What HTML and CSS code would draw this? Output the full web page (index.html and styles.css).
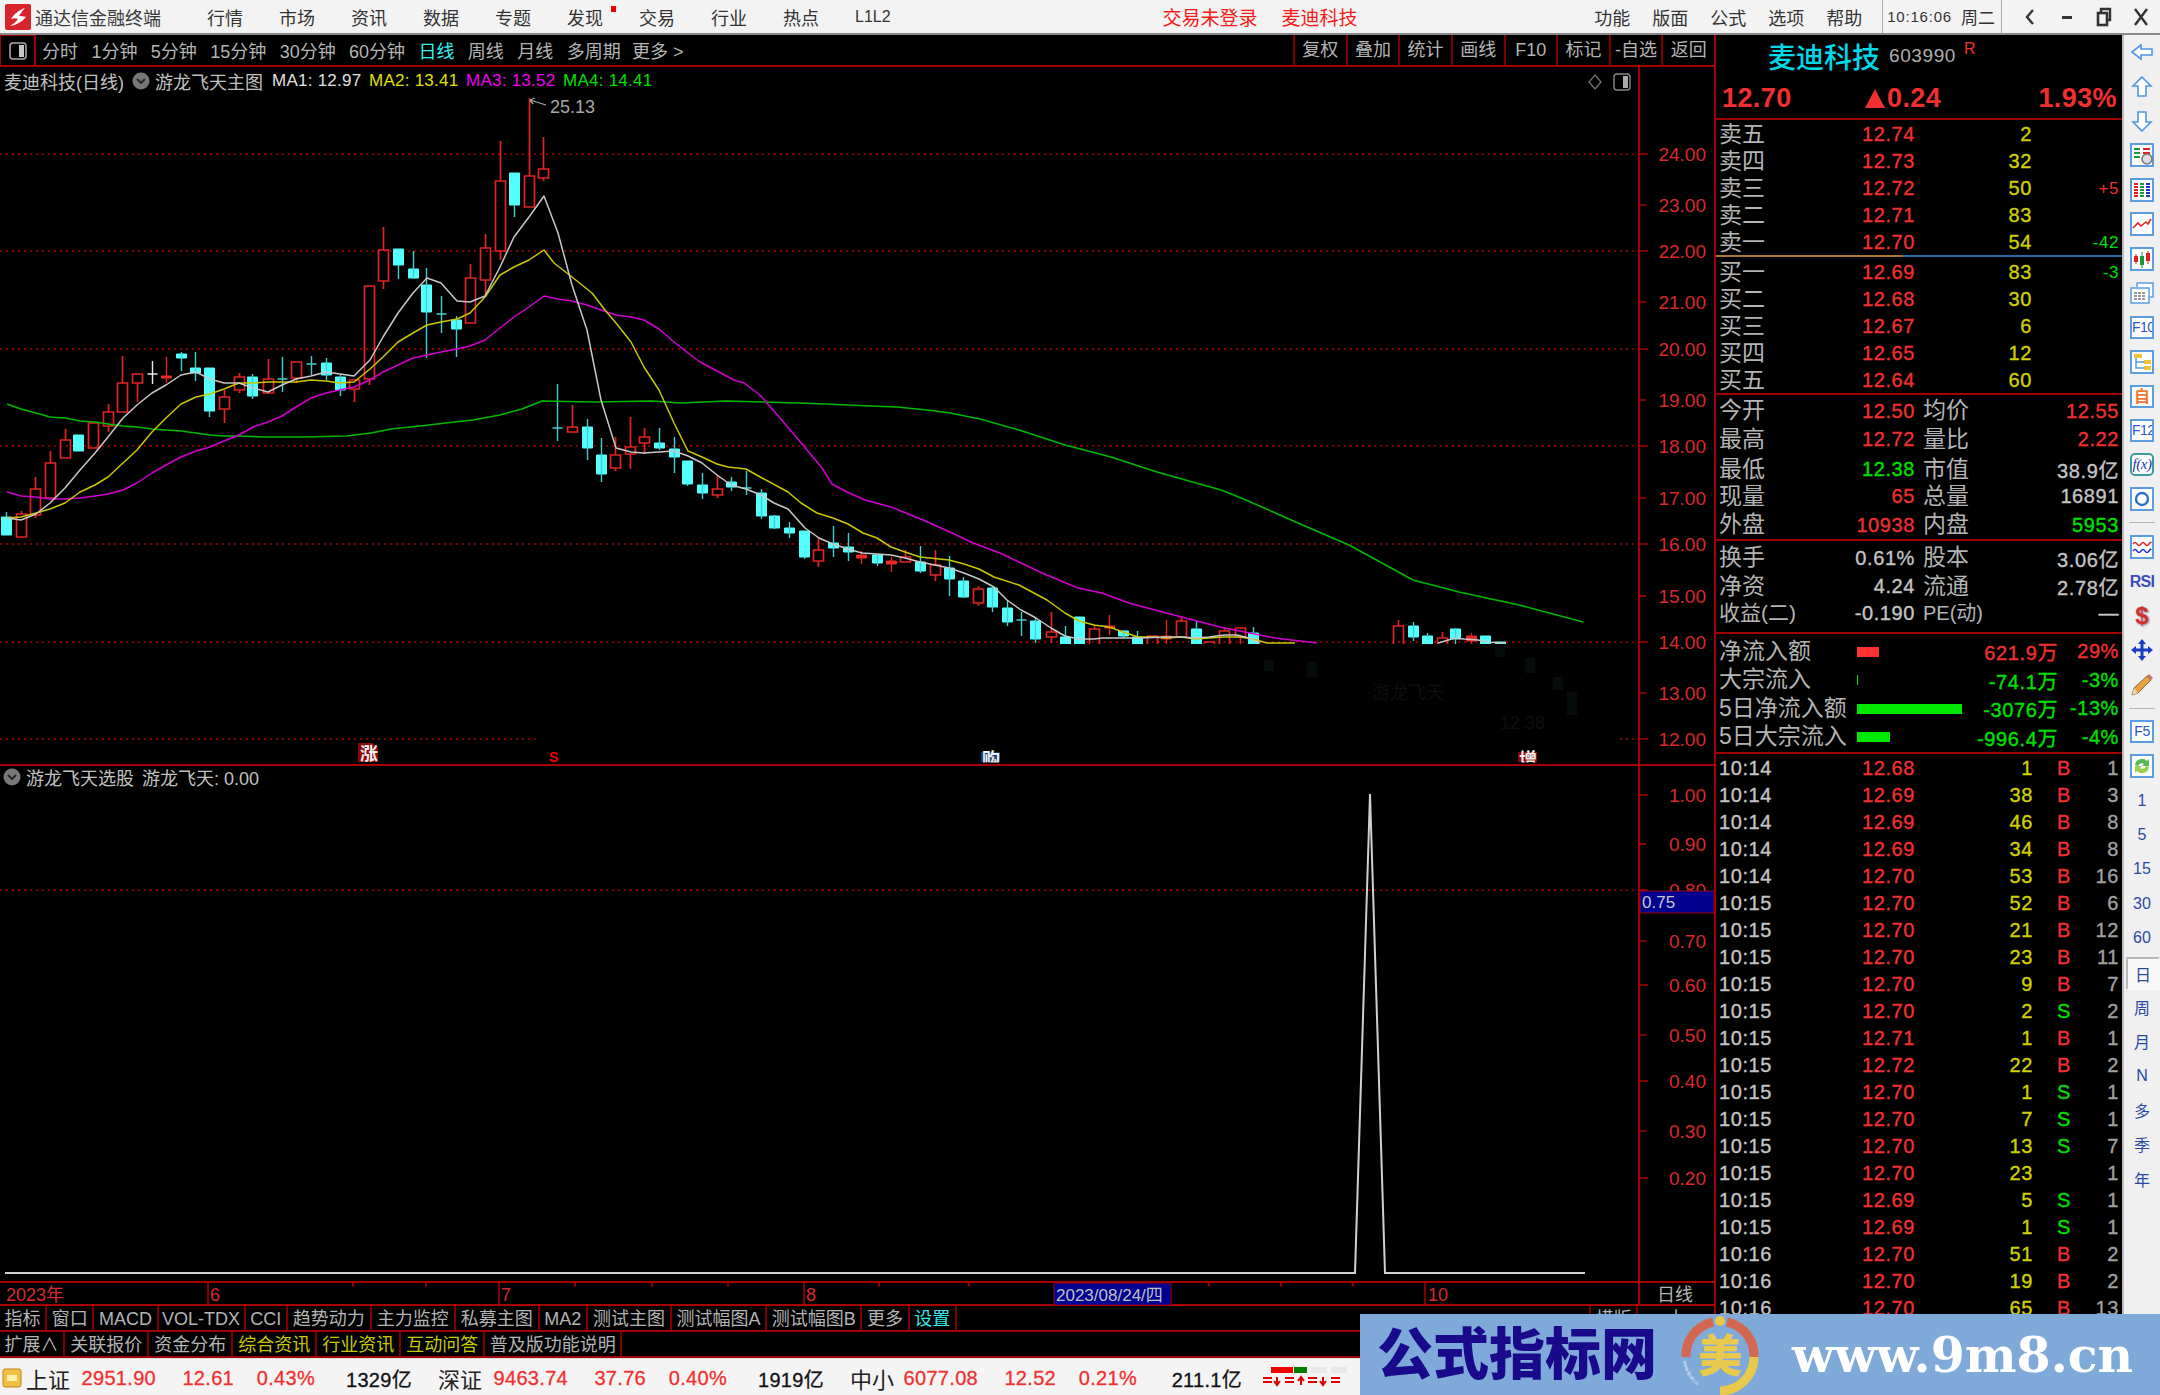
FILE: index.html
```html
<!DOCTYPE html>
<html lang="zh-CN">
<head>
<meta charset="utf-8">
<title>通达信金融终端</title>
<link rel="stylesheet" href="styles.css">
</head>
<body>
<div class="app">
  <header class="titlebar">
    <svg class="applogo" viewBox="0 0 26 26"><rect width="26" height="26" rx="2" fill="#d8232a"/><path d="M20 4C14 6 9 10 6 15c3-1 5-1 7 0-2 3-5 5-8 7 6-1 12-4 16-9-3-1-5-1-7-1 2-3 4-6 6-8z" fill="#fff"/></svg>
    <span class="apptitle">通达信金融终端</span>
    <nav class="menu">
      <span>行情</span><span>市场</span><span>资讯</span><span>数据</span><span>专题</span><span class="hasdot">发现<i class="dot"></i></span><span>交易</span><span>行业</span><span>热点</span><span class="l2">L1L2</span>
    </nav>
    <div class="alert"><span>交易未登录</span><span>麦迪科技</span></div>
    <nav class="menu-right"><span>功能</span><span>版面</span><span>公式</span><span>选项</span><span>帮助</span></nav>
    <div class="clock"><span class="time">10:16:06</span><span class="week">周二</span></div>
    <div class="winbtns">
      <svg viewBox="0 0 16 20"><path d="M11 3 5 10l6 7" fill="none" stroke="#333" stroke-width="2.4"/></svg>
      <svg viewBox="0 0 16 20"><path d="M3 10.5h10" stroke="#333" stroke-width="3"/></svg>
      <svg viewBox="0 0 16 20"><path d="M5 5V2h9v11h-3" fill="none" stroke="#333" stroke-width="2.4"/><rect x="2" y="6" width="9" height="12" fill="none" stroke="#333" stroke-width="2.6"/></svg>
      <svg viewBox="0 0 16 20"><path d="M2 2l12 16M14 2 2 18" stroke="#333" stroke-width="2.4"/></svg>
    </div>
  </header>

  <div class="workspace">
    <section class="left">
      <div class="toolbar">
        <div class="panelbtn"><svg viewBox="0 0 18 18"><rect x="1" y="1" width="16" height="16" rx="3" fill="none" stroke="#a8a8a8" stroke-width="1.6"/><rect x="10" y="3" width="5" height="12" fill="#c8c8c8"/></svg></div>
        <div class="periods">
          <span>分时</span><span>1分钟</span><span>5分钟</span><span>15分钟</span><span>30分钟</span><span>60分钟</span><span class="cur">日线</span><span>周线</span><span>月线</span><span>多周期</span><span class="more">更多 &gt;</span>
        </div>
        <div class="tools">
          <span>复权</span><span>叠加</span><span>统计</span><span>画线</span><span>F10</span><span>标记</span><span>-自选</span><span>返回</span>
        </div>
      </div>

      <div class="chart">
        <svg class="plot" viewBox="0 67 1715 1239" width="1715" height="1239">
          <defs>
            <clipPath id="cut"><rect x="0" y="67" width="1639" height="577"/></clipPath>
            <clipPath id="sig"><rect x="0" y="743" width="1639" height="19.5"/></clipPath>
          </defs>
          <g class="grid">
            <path d="M0 154H1639M0 251H1639M0 349H1639M0 446H1639M0 544H1639M0 642H1639M0 739H537M1620 739H1639M0 890H1639"/>
          </g>
          <g clip-path="url(#cut)">
            <path class="k-up" d="M21.5 511V514M16.5 514H26.5V537H16.5ZM35.5 477V489M30.5 489H40.5V515H30.5ZM35.5 515V518M50.5 451V463M45.5 463H55.5V498H45.5ZM65.5 429V440M60.5 440H70.5V458H60.5ZM93.5 422V423M88.5 423H98.5V448H88.5ZM108.5 404V412M103.5 412H113.5V426H103.5ZM108.5 426V432M122.5 356V383M117.5 383H127.5V412H117.5ZM132.5 374H142.5V383H132.5ZM137.5 383V402M224.5 390V397M219.5 397H229.5V409H219.5ZM224.5 409V423M239.5 373V377M234.5 377H244.5V390H234.5ZM239.5 390V393M268.5 359V379M263.5 379H273.5V393H263.5ZM291.5 362H301.5V378H291.5ZM296.5 378V383M349.5 380H359.5V389H349.5ZM354.5 389V402M364.5 286H374.5V379H364.5ZM369.5 379V385M383.5 227V250M378.5 250H388.5V281H378.5ZM383.5 281V289M470.5 264V278M465.5 278H475.5V323H465.5ZM485.5 234V248M480.5 248H490.5V280H480.5ZM485.5 280V295M500.5 141V181M495.5 181H505.5V251H495.5ZM500.5 251V260M529.5 98V176M524.5 176H534.5V207H524.5ZM543.5 137V169M538.5 169H548.5V178H538.5ZM543.5 178V181M572.5 405V427M567.5 427H577.5V432H567.5ZM615.5 437V455M610.5 455H620.5V468H610.5ZM615.5 468V471M630.5 417V447M625.5 447H635.5V454H625.5ZM630.5 454V469M644.5 428V437M639.5 437H649.5V443H639.5ZM644.5 443V454M717.5 475V489M712.5 489H722.5V495H712.5ZM717.5 495V498M818.5 538V550M813.5 550H823.5V561H813.5ZM818.5 561V567M900.5 557H910.5V562H900.5ZM905.5 550V557M935.5 550V565M930.5 565H940.5V575H930.5ZM935.5 575V581M978.5 586V589M973.5 589H983.5V603H973.5ZM978.5 603V606M1051.5 612V632M1046.5 632H1056.5V637H1046.5ZM1051.5 637V643M1094.5 625V629M1089.5 629H1099.5V650H1089.5ZM1147.5 636H1157.5V650H1147.5ZM1181.5 616V621M1176.5 621H1186.5V637H1176.5ZM1204.5 642H1214.5V650H1204.5ZM1224.5 627V631M1219.5 631H1229.5V650H1219.5ZM1235.5 628H1245.5V637H1235.5ZM1240.5 637V644M1398.5 620V626M1393.5 626H1403.5V650H1393.5ZM1442.5 632V638M1437.5 638H1447.5V650H1437.5Z"/>
            <path class="k-upfill" d="M161.5 376H171.5V378H161.5ZM856.5 555H866.5V558H856.5ZM886.5 561H896.5V564H886.5ZM1104.5 626H1114.5V628H1104.5ZM1161.5 636H1171.5V639H1161.5ZM1466.5 636H1476.5V641H1466.5Z"/>
            <path class="k-up thin" d="M166.5 357V383M861.5 551V564M891.5 557V572M1109.5 615V635M1166.5 620V644M1471.5 633V644"/>
            <path class="k-down" d="M1.5 517H11.5V535H1.5ZM73.5 435H83.5V451H73.5ZM176.5 354H186.5V358H176.5ZM190.5 368H200.5V373H190.5ZM204.5 368H214.5V411H204.5ZM247.5 377H257.5V396H247.5ZM321.5 363H331.5V375H321.5ZM335.5 377H345.5V390H335.5ZM393.5 249H403.5V265H393.5ZM408.5 269H418.5V278H408.5ZM421.5 285H431.5V312H421.5ZM451.5 320H461.5V329H451.5ZM509.5 173H519.5V205H509.5ZM582.5 427H592.5V448H582.5ZM596.5 455H606.5V474H596.5ZM654.5 443H664.5V448H654.5ZM669.5 449H679.5V457H669.5ZM682.5 461H692.5V484H682.5ZM697.5 485H707.5V493H697.5ZM726.5 482H736.5V487H726.5ZM756.5 493H766.5V516H756.5ZM769.5 516H779.5V528H769.5ZM784.5 528H794.5V533H784.5ZM799.5 531H809.5V557H799.5ZM828.5 543H838.5V548H828.5ZM843.5 547H853.5V552H843.5ZM872.5 555H882.5V563H872.5ZM915.5 562H925.5V571H915.5ZM944.5 568H954.5V579H944.5ZM958.5 581H968.5V597H958.5ZM987.5 588H997.5V607H987.5ZM1002.5 608H1012.5V622H1002.5ZM1030.5 621H1040.5V639H1030.5ZM1060.5 637H1070.5V650H1060.5ZM1074.5 617H1084.5V650H1074.5ZM1118.5 631H1128.5V636H1118.5ZM1132.5 637H1142.5V650H1132.5ZM1191.5 629H1201.5V650H1191.5ZM1248.5 633H1258.5V650H1248.5ZM1408.5 626H1418.5V637H1408.5ZM1422.5 636H1432.5V650H1422.5ZM1450.5 629H1460.5V639H1450.5ZM1480.5 636H1490.5V650H1480.5ZM1495.5 642H1505.5V650H1495.5Z"/>
            <path class="k-wick" d="M6.5 512V517M181.5 352V371M195.5 352V381M209.5 411V417M252.5 374V399M326.5 358V380M340.5 375V396M398.5 265V279M413.5 251V279M426.5 268V358M456.5 316V357M514.5 205V217M587.5 419V460M601.5 438V482M659.5 428V450M674.5 437V473M687.5 484V486M702.5 473V499M731.5 477V491M761.5 489V519M774.5 515V529M789.5 522V538M804.5 557V559M833.5 526V557M848.5 533V561M877.5 554V566M920.5 546V573M949.5 556V596M963.5 577V598M992.5 587V612M1007.5 600V626M1035.5 618V643M1065.5 626V637M1123.5 630V638M1137.5 631V637M1196.5 621V629M1253.5 627V633M1413.5 622V641M1427.5 633V636M1455.5 628V644M282.5 357V392M277.5 379H287.5M311.5 356V375M306.5 364H316.5M441.5 296V333M436.5 314H446.5M557.5 384V441M552.5 428H562.5M746.5 471V495M741.5 488H751.5M1021.5 612V636M1016.5 620H1026.5"/>
            <path class="k-doji" d="M152.5 361V384M147.5 374H157.5"/>
            <polyline class="ma ma4" points="7,404 21,409 36,413 50,417 65,418 80,421 95,422 108,424 123,426 137,427 152,429 166,430 181,431 196,433 210,435 224,436 239,436 263,437 304,437 346,436 371,433 391,429 420,426 446,423 473,420 500,415 522,409 542,401 594,402 652,401 681,403 725,401 799,403 826,404 870,406 897,407 927,410 950,413 980,419 1019,430 1065,445 1111,457 1157,472 1221,490 1246,500 1298,523 1349,545 1413,580 1459,592 1519,605 1583,622"/>
            <polyline class="ma ma3" points="7,492 21,496 36,497 50,499 65,499 80,498 95,496 108,494 123,490 137,483 152,473 166,465 181,457 196,451 210,447 224,441 239,435 253,427 268,422 282,416 296,407 311,398 326,393 340,390 354,387 370,380 383,372 398,365 413,358 427,355 441,352 457,349 470,346 485,340 500,328 514,317 529,307 544,296 558,299 572,301 587,305 601,310 616,315 631,317 644,320 659,329 674,342 688,353 700,362 734,380 744,383 760,395 780,418 803,445 822,468 832,484 847,492 865,500 891,507 923,520 950,532 973,543 1000,553 1042,573 1078,588 1102,593 1129,603 1170,614 1220,627 1275,638 1317,643"/>
            <polyline class="ma ma2" points="7,518 21,517 36,513 50,509 65,503 80,492 95,485 108,477 123,463 137,450 152,432 166,418 181,404 196,397 210,394 224,389 239,383 253,383 268,382 282,382 296,382 311,380 326,381 340,383 354,382 370,369 383,357 398,342 413,333 427,325 441,322 457,319 470,313 485,297 500,275 514,267 529,260 544,250 554,263 572,277 592,293 605,310 616,323 631,342 644,367 659,390 674,423 688,451 702,457 717,464 728,467 746,469 762,478 788,492 801,503 817,513 833,518 848,524 863,533 877,538 891,547 905,552 920,557 949,560 964,564 979,569 994,577 1019,585 1047,600 1065,613 1079,621 1094,625 1109,627 1123,632 1138,637 1153,637 1166,638 1181,637 1196,639 1209,638 1224,637 1240,637 1253,639 1267,643 1295,643"/>
            <polyline class="ma ma1" points="7,518 21,520 36,514 50,503 65,488 80,470 95,453 108,437 123,418 137,405 152,393 166,385 181,375 196,372 210,379 224,383 239,383 253,388 268,392 282,385 296,379 311,376 326,372 340,374 354,376 370,360 383,337 398,313 413,293 427,278 441,283 457,301 470,302 485,296 500,267 514,237 529,217 544,196 558,233 572,285 587,330 601,400 616,448 631,452 644,453 659,452 674,451 688,456 702,463 717,475 731,485 746,489 761,495 774,503 788,509 805,528 819,538 833,544 848,549 862,553 877,554 891,555 905,558 920,562 935,565 949,568 964,573 979,579 994,587 1007,600 1021,610 1036,618 1051,628 1065,636 1079,639 1094,639 1102,638 1138,638 1166,637 1181,637 1196,638 1209,637 1224,635 1237,635 1249,638 1260,643"/>
            <polyline class="ma ma1" points="1438,643 1445,641 1455,638 1464,639 1478,640 1487,642 1505,643"/>
          </g>
          <g class="ghost">
            <rect x="1264" y="660" width="10" height="11"/><rect x="1307" y="662" width="10" height="15"/><rect x="1495" y="647" width="10" height="10"/><rect x="1525" y="658" width="10" height="15"/><rect x="1553" y="677" width="10" height="13"/><rect x="1567" y="692" width="10" height="23"/>
            <text x="1372" y="699">游龙飞天</text><text x="1500" y="729">12.38</text>
          </g>
          <path class="peak-arrow" d="M530 100 546 105M530 100l5-2M530 100l3 4"/>
          <text class="hl" x="550" y="113">25.13</text>
          <g clip-path="url(#sig)">
            <path class="sig-red" d="M358 743H373L378 748V762H358Z"/>
            <text class="sig-t" x="360" y="760">涨</text>
            <rect class="sig-blue" x="981" y="752" width="19" height="10"/>
            <text class="sig-t" x="982" y="766">购</text>
            <rect class="sig-red" x="1518" y="752" width="19" height="10"/>
            <text class="sig-t" x="1519" y="766">增</text>
            <text class="sig-s" x="549" y="762">S</text>
          </g>
          <path class="axis" d="M1639 66V1306M0 765H1715M0 1282H1715M0 1305H1715"/>
          <path class="axis thin" d="M1640 154h8M1640 205h6M1640 251h8M1640 302h6M1640 349h8M1640 400h6M1640 446h8M1640 498h6M1640 544h8M1640 596h6M1640 642h8M1640 693h6M1640 739h8M1640 795h8M1640 844h6M1640 890h8M1640 941h6M1640 985h8M1640 1035h6M1640 1081h8M1640 1131h6M1640 1178h8"/>
          <g class="ax">
            <text x="1706" y="161">24.00</text><text x="1706" y="212">23.00</text><text x="1706" y="258">22.00</text><text x="1706" y="309">21.00</text><text x="1706" y="356">20.00</text><text x="1706" y="407">19.00</text><text x="1706" y="453">18.00</text><text x="1706" y="505">17.00</text><text x="1706" y="551">16.00</text><text x="1706" y="603">15.00</text><text x="1706" y="649">14.00</text><text x="1706" y="700">13.00</text><text x="1706" y="746">12.00</text>
            <text x="1706" y="802">1.00</text><text x="1706" y="851">0.90</text><text x="1706" y="897">0.80</text><text x="1706" y="948">0.70</text><text x="1706" y="992">0.60</text><text x="1706" y="1042">0.50</text><text x="1706" y="1088">0.40</text><text x="1706" y="1138">0.30</text><text x="1706" y="1185">0.20</text>
          </g>
          <polyline class="signal" points="5,1273 1355,1273 1370,794 1385,1273 1585,1273"/>
          <rect class="cursor" x="1640" y="891" width="74" height="22"/>
          <text class="cursor-t" x="1642" y="908">0.75</text>
          <path class="axis thin" d="M208 1283v22M499 1283v22M804 1283v22M1425 1283v22M353 1283v4M426 1283v4M575 1283v4M652 1283v4M728 1283v4M879 1283v4M969 1283v4M1209 1283v4M1281 1283v4M1353 1283v4"/>
          <g class="dates">
            <text x="6" y="1301">2023年</text><text x="210" y="1301">6</text><text x="501" y="1301">7</text><text x="806" y="1301">8</text><text x="1428" y="1301">10</text>
          </g>
          <rect class="cursor" x="1054" y="1283" width="117" height="22"/>
          <text class="cursor-d" x="1056" y="1301">2023/08/24/四</text>
          <text class="axis-cap" x="1657" y="1301">日线</text>
        </svg>
        <div class="legend">
          <span class="lg-name">麦迪科技(日线)</span>
          <svg class="chev" viewBox="0 0 18 18"><circle cx="9" cy="9" r="8.5" fill="#777"/><path d="M5 7l4 4 4-4" fill="none" stroke="#222" stroke-width="1.8"/></svg>
          <span class="lg-name">游龙飞天主图</span>
          <span class="lg-ma c1">MA1: 12.97</span><span class="lg-ma c2">MA2: 13.41</span><span class="lg-ma c3">MA3: 13.52</span><span class="lg-ma c4">MA4: 14.41</span>
        </div>
        <div class="chart-tools">
          <svg viewBox="0 0 16 20" width="16" height="20"><path d="M8 3 14 10 8 17 2 10Z" fill="none" stroke="#777" stroke-width="1.2"/></svg>
          <svg viewBox="0 0 18 18" width="18" height="18"><rect x="1" y="1" width="16" height="16" rx="3" fill="none" stroke="#888" stroke-width="1.4"/><rect x="10" y="3" width="5" height="12" fill="#aaa"/></svg>
        </div>
        <div class="legend legend-sub">
          <svg class="chev" viewBox="0 0 18 18"><circle cx="9" cy="9" r="8.5" fill="#777"/><path d="M5 7l4 4 4-4" fill="none" stroke="#222" stroke-width="1.8"/></svg>
          <span class="lg-name">游龙飞天选股</span>
          <span class="lg-name">游龙飞天: 0.00</span>
        </div>
      </div>

      <div class="tabs">
        <span>指标</span><span>窗口</span><span>MACD</span><span class="tight">VOL-TDX</span><span>CCI</span><span class="w4">趋势动力</span><span class="w4">主力监控</span><span class="w4">私募主图</span><span>MA2</span><span class="w4">测试主图</span><span>测试幅图A</span><span>测试幅图B</span><span>更多</span><span class="cyan">设置</span>
        <span class="push">横版</span><span class="narrow">十</span>
      </div>
      <div class="tabs">
        <span>扩展∧</span><span class="w4">关联报价</span><span class="w4">资金分布</span><span class="w4 yel">综合资讯</span><span class="w4 yel">行业资讯</span><span class="w4 yel">互动问答</span><span>普及版功能说明</span>
      </div>
    </section>

    <aside class="quote">
      <div class="q-head"><span class="q-name">麦迪科技</span><span class="q-code">603990</span><sup class="q-r">R</sup></div>
      <div class="q-price"><span>12.70</span><span class="q-up"><svg viewBox="0 0 20 20" width="20" height="20"><path d="M10 1 20 20H0Z" fill="#f03030"/></svg>0.24</span><span>1.93%</span></div>

      <div class="book">
        <div class="row-b"><span class="lb">卖五</span><span class="r red">12.74</span><span class="r yel">2</span><span class="r"></span></div>
        <div class="row-b"><span class="lb">卖四</span><span class="r red">12.73</span><span class="r yel">32</span><span class="r"></span></div>
        <div class="row-b"><span class="lb">卖三</span><span class="r red">12.72</span><span class="r yel">50</span><span class="r red sm">+5</span></div>
        <div class="row-b"><span class="lb">卖二</span><span class="r red">12.71</span><span class="r yel">83</span><span class="r"></span></div>
        <div class="row-b"><span class="lb">卖一</span><span class="r red">12.70</span><span class="r yel">54</span><span class="r grn sm">-42</span></div>
      </div>
      <div class="split"></div>
      <div class="book buy">
        <div class="row-b"><span class="lb">买一</span><span class="r red">12.69</span><span class="r yel">83</span><span class="r grn sm">-3</span></div>
        <div class="row-b"><span class="lb">买二</span><span class="r red">12.68</span><span class="r yel">30</span><span class="r"></span></div>
        <div class="row-b"><span class="lb">买三</span><span class="r red">12.67</span><span class="r yel">6</span><span class="r"></span></div>
        <div class="row-b"><span class="lb">买四</span><span class="r red">12.65</span><span class="r yel">12</span><span class="r"></span></div>
        <div class="row-b"><span class="lb">买五</span><span class="r red">12.64</span><span class="r yel">60</span><span class="r"></span></div>
      </div>

      <div class="block">
        <div class="row-i"><span class="lb">今开</span><span class="r red">12.50</span><span class="lb">均价</span><span class="r red">12.55</span></div>
        <div class="row-i"><span class="lb">最高</span><span class="r red">12.72</span><span class="lb">量比</span><span class="r red">2.22</span></div>
        <div class="row-i"><span class="lb">最低</span><span class="r grn">12.38</span><span class="lb">市值</span><span class="r gry">38.9亿</span></div>
        <div class="row-i"><span class="lb">现量</span><span class="r red">65</span><span class="lb">总量</span><span class="r gry">16891</span></div>
        <div class="row-i"><span class="lb">外盘</span><span class="r red">10938</span><span class="lb">内盘</span><span class="r grn">5953</span></div>
      </div>
      <div class="block pad6">
        <div class="row-i"><span class="lb">换手</span><span class="r gry">0.61%</span><span class="lb">股本</span><span class="r gry">3.06亿</span></div>
        <div class="row-i"><span class="lb">净资</span><span class="r gry">4.24</span><span class="lb">流通</span><span class="r gry">2.78亿</span></div>
        <div class="row-i"><span class="lb eps">收益(二)</span><span class="r gry">-0.190</span><span class="lb pe">PE(动)</span><span class="r gry">—</span></div>
      </div>
      <div class="block pad3">
        <div class="row-f"><span class="lb">净流入额</span><span class="barcell"><i class="bar bred b22"></i></span><span class="r red">621.9万</span><span class="r red">29%</span></div>
        <div class="row-f"><span class="lb">大宗流入</span><span class="barcell"><i class="bar bgrn b1"></i></span><span class="r grn">-74.1万</span><span class="r grn">-3%</span></div>
        <div class="row-f"><span class="lb">5日净流入额</span><span class="barcell"><i class="bar bgrn b105"></i></span><span class="r grn">-3076万</span><span class="r grn">-13%</span></div>
        <div class="row-f"><span class="lb">5日大宗流入</span><span class="barcell"><i class="bar bgrn b33"></i></span><span class="r grn">-996.4万</span><span class="r grn">-4%</span></div>
      </div>

      <div class="ticks">
        <div class="row-t"><span class="gry">10:14</span><span class="r red">12.68</span><span class="r yel">1</span><span class="red">B</span><span class="r dim">1</span></div>
        <div class="row-t"><span class="gry">10:14</span><span class="r red">12.69</span><span class="r yel">38</span><span class="red">B</span><span class="r dim">3</span></div>
        <div class="row-t"><span class="gry">10:14</span><span class="r red">12.69</span><span class="r yel">46</span><span class="red">B</span><span class="r dim">8</span></div>
        <div class="row-t"><span class="gry">10:14</span><span class="r red">12.69</span><span class="r yel">34</span><span class="red">B</span><span class="r dim">8</span></div>
        <div class="row-t"><span class="gry">10:14</span><span class="r red">12.70</span><span class="r yel">53</span><span class="red">B</span><span class="r dim">16</span></div>
        <div class="row-t"><span class="gry">10:15</span><span class="r red">12.70</span><span class="r yel">52</span><span class="red">B</span><span class="r dim">6</span></div>
        <div class="row-t"><span class="gry">10:15</span><span class="r red">12.70</span><span class="r yel">21</span><span class="red">B</span><span class="r dim">12</span></div>
        <div class="row-t"><span class="gry">10:15</span><span class="r red">12.70</span><span class="r yel">23</span><span class="red">B</span><span class="r dim">11</span></div>
        <div class="row-t"><span class="gry">10:15</span><span class="r red">12.70</span><span class="r yel">9</span><span class="red">B</span><span class="r dim">7</span></div>
        <div class="row-t"><span class="gry">10:15</span><span class="r red">12.70</span><span class="r yel">2</span><span class="grn">S</span><span class="r dim">2</span></div>
        <div class="row-t"><span class="gry">10:15</span><span class="r red">12.71</span><span class="r yel">1</span><span class="red">B</span><span class="r dim">1</span></div>
        <div class="row-t"><span class="gry">10:15</span><span class="r red">12.72</span><span class="r yel">22</span><span class="red">B</span><span class="r dim">2</span></div>
        <div class="row-t"><span class="gry">10:15</span><span class="r red">12.70</span><span class="r yel">1</span><span class="grn">S</span><span class="r dim">1</span></div>
        <div class="row-t"><span class="gry">10:15</span><span class="r red">12.70</span><span class="r yel">7</span><span class="grn">S</span><span class="r dim">1</span></div>
        <div class="row-t"><span class="gry">10:15</span><span class="r red">12.70</span><span class="r yel">13</span><span class="grn">S</span><span class="r dim">7</span></div>
        <div class="row-t"><span class="gry">10:15</span><span class="r red">12.70</span><span class="r yel">23</span><span></span><span class="r dim">1</span></div>
        <div class="row-t"><span class="gry">10:15</span><span class="r red">12.69</span><span class="r yel">5</span><span class="grn">S</span><span class="r dim">1</span></div>
        <div class="row-t"><span class="gry">10:15</span><span class="r red">12.69</span><span class="r yel">1</span><span class="grn">S</span><span class="r dim">1</span></div>
        <div class="row-t"><span class="gry">10:16</span><span class="r red">12.70</span><span class="r yel">51</span><span class="red">B</span><span class="r dim">2</span></div>
        <div class="row-t"><span class="gry">10:16</span><span class="r red">12.70</span><span class="r yel">19</span><span class="red">B</span><span class="r dim">2</span></div>
        <div class="row-t"><span class="gry">10:16</span><span class="r red">12.70</span><span class="r yel">65</span><span class="red">B</span><span class="r dim">13</span></div>
      </div>
    </aside>

    <aside class="sidebar">
      <div class="cell"><svg class="ic" viewBox="0 0 24 24"><path d="M2 12 11 5V9H22V15H11V19Z" class="arrow"/></svg></div>
      <div class="cell"><svg class="ic" viewBox="0 0 24 24"><path d="M12 2 21 11H16V21H8V11H3Z" class="arrow"/></svg></div>
      <div class="cell"><svg class="ic" viewBox="0 0 24 24"><path d="M12 22 21 13H16V3H8V13H3Z" class="arrow"/></svg></div>
      <div class="cell"><svg class="ic" viewBox="0 0 24 24"><rect x="1" y="1" width="22" height="22" class="ibox"/><path d="M4 6h6M4 10h6M4 14h6" stroke="#1a9a3a" stroke-width="2"/><path d="M13 6h7M13 10h7" stroke="#e02020" stroke-width="2"/><circle cx="17" cy="16" r="5" fill="#ddd" stroke="#777" stroke-width="1.6"/></svg></div>
      <div class="cell"><svg class="ic" viewBox="0 0 24 24"><rect x="1" y="1" width="22" height="22" class="ibox"/><path d="M6 5v14" stroke="#e02020" stroke-width="4" stroke-dasharray="2 1"/><path d="M12 5v14" stroke="#1a9a3a" stroke-width="4" stroke-dasharray="2 1"/><path d="M18 5v14" stroke="#2030d0" stroke-width="4" stroke-dasharray="2 1"/></svg></div>
      <div class="cell"><svg class="ic" viewBox="0 0 24 24"><rect x="1" y="1" width="22" height="22" class="ibox"/><path d="M3 16 8 11l3 3 5-4 2 2 3-5" fill="none" stroke="#e02020" stroke-width="1.6"/></svg></div>
      <div class="cell"><svg class="ic" viewBox="0 0 24 24"><rect x="1" y="1" width="22" height="22" class="ibox"/><path d="M6 7v10M18 4v13" stroke="#e02020"/><path d="M12 5v16" stroke="#1a9a3a"/><rect x="4" y="9" width="4" height="6" fill="#e02020"/><rect x="10" y="9" width="4" height="9" fill="#1a9a3a"/><rect x="16" y="6" width="4" height="8" fill="#e02020"/></svg></div>
      <div class="cell"><svg class="ic" viewBox="0 0 24 24"><path d="M7 6V2H23V16H19" fill="#fff" stroke="#5a9de0" stroke-width="1.5"/><rect x="1" y="7" width="18" height="15" fill="#fff" stroke="#5a9de0" stroke-width="1.5"/><path d="M4 12h12M4 15h12M4 18h12" stroke="#777" stroke-width="1.6" stroke-dasharray="3 1"/></svg></div>
      <div class="cell"><span class="fbox">F10</span></div>
      <div class="cell"><svg class="ic" viewBox="0 0 24 24"><rect x="1" y="1" width="22" height="22" class="ibox"/><path d="M6 8v11M6 12h8M6 18h8" fill="none" stroke="#5a9de0" stroke-width="1.5"/><rect x="4" y="4" width="8" height="4" fill="#f0c040"/><rect x="14" y="10" width="7" height="4" fill="#f0c040"/><rect x="14" y="16" width="7" height="4" fill="#f0c040"/></svg></div>
      <div class="cell"><span class="fbox orange">自</span></div>
      <div class="cell"><span class="fbox">F12</span></div>
      <div class="cell"><span class="fbox teal">f(x)</span></div>
      <div class="cell"><svg class="ic" viewBox="0 0 24 24"><rect x="1" y="1" width="22" height="22" class="ibox"/><circle cx="12" cy="12" r="6" fill="none" stroke="#2a6fc8" stroke-width="2.4"/></svg></div>
      <div class="sep"></div>
      <div class="cell"><svg class="ic" viewBox="0 0 24 24"><rect x="1" y="1" width="22" height="22" class="ibox"/><path d="M3 9q2-3 4 0t4 0 4 0 4 0 2-1" fill="none" stroke="#e02020" stroke-width="1.4"/><path d="M3 16q2-3 4 0t4 0 4 0 4 0 2-1" fill="none" stroke="#2030d0" stroke-width="1.4"/></svg></div>
      <div class="cell"><span class="rsi">RSI</span></div>
      <div class="cell"><span class="dollar">$</span></div>
      <div class="cell"><svg class="ic" viewBox="0 0 24 24"><path d="M12 1 16 6H13.5V10.500H18V8L23 12 18 16V13.500H13.500V18H16L12 23 8 18H10.500V13.500H6V16L1 12 6 8V10.500H10.500V6H8Z" fill="#1a3cc0"/></svg></div>
      <div class="cell"><svg class="ic" viewBox="0 0 24 24"><path d="M2 22 4 15 17 3 21 7 8 20Z" fill="#e8a040" stroke="#8a6a30"/><path d="M17 3 19 1 23 5 21 7Z" fill="#d07070"/><path d="M2 22 4 15 8 20Z" fill="#e8d8b0"/></svg></div>
      <div class="sep short"></div>
      <div class="cell"><span class="fbox">F5</span></div>
      <div class="cell"><svg class="ic" viewBox="0 0 24 24"><rect x="1" y="1" width="22" height="22" class="ibox"/><path d="M5 11a7 7 0 0 1 12-4l2-2v7h-7l2-2a4 4 0 0 0-6 2Z" fill="#58b858"/><path d="M19 13a7 7 0 0 1-12 4l-2 2v-7h7l-2 2a4 4 0 0 0 6-2Z" fill="#9ad050"/></svg></div>
      <div class="cell txt">1</div><div class="cell txt">5</div><div class="cell txt">15</div><div class="cell txt">30</div><div class="cell txt">60</div>
      <div class="cell txt active">日</div>
      <div class="cell txt">周</div><div class="cell txt">月</div><div class="cell txt">N</div><div class="cell txt">多</div><div class="cell txt">季</div><div class="cell txt">年</div>
    </aside>
  </div>

  <footer class="status">
    <svg class="st-icon" viewBox="0 0 20 20"><rect x="1" y="1" width="18" height="18" rx="2" fill="#f0c040" stroke="#c08020"/><rect x="5" y="7" width="10" height="6" fill="#fff0b0"/></svg>
    <div class="idx"><span class="nm">上证</span><span class="red">2951.90</span><span class="red">12.61</span><span class="red">0.43%</span><span class="amt">1329亿</span></div>
    <div class="idx"><span class="nm">深证</span><span class="red">9463.74</span><span class="red">37.76</span><span class="red">0.40%</span><span class="amt">1919亿</span></div>
    <div class="idx wide"><span class="nm">中小</span><span class="red">6077.08</span><span class="red">12.52</span><span class="red">0.21%</span><span class="amt">211.1亿</span></div>
    <svg class="mini" viewBox="0 0 90 28" width="90" height="28"><rect x="10" y="3" width="22" height="6" fill="#f00000"/><rect x="33" y="3" width="13" height="6" fill="#008000"/><rect x="50" y="3" width="16" height="6" fill="#e8e8e8"/><rect x="70" y="3" width="16" height="6" fill="#e8e8e8"/><path d="M2 14h9M2 18h9M16 13v7M13 17l3 4 3-4M24 14h9M24 18h9M40 21v-7M37 17l3-4 3 4M47 14h9M47 18h9M62 13v7M59 17l3 4 3-4M70 14h9M70 18h9" stroke="#e00000" stroke-width="2" fill="none"/></svg>
  </footer>

  <div class="ad">
    <span class="ad-cn">公式指标网</span>
    <svg class="ad-logo" viewBox="0 0 80 80" width="80" height="80">
      <path d="M6 42A34 34 0 0 1 33 7M47 7A34 34 0 0 1 74 42" fill="none" stroke="#d4674f" stroke-width="9"/>
      <path d="M74 42A34 34 0 0 1 40 76" fill="none" stroke="#e9c94c" stroke-width="9"/>
      <defs><path id="adring" d="M3 46A38 38 0 0 0 34 78"/></defs>
      <text class="ad-ring"><textPath href="#adring">www.9m8.cn</textPath></text>
      <circle cx="40" cy="6" r="5" fill="#e9c94c"/>
      <text class="ad-mark" x="40" y="57" text-anchor="middle">美</text>
    </svg>
    <span class="ad-url">www.9m8.cn</span>
  </div>
</div>
</body>
</html>
```
FILE: styles.css
```css
* { box-sizing: border-box; }
html, body { margin: 0; padding: 0; background: #000; }
body { font-family: "Liberation Sans", "Noto Sans CJK SC", sans-serif; overflow: hidden; }
.app { position: relative; width: 2160px; height: 1395px; display: flex; flex-direction: column; overflow: hidden; }

/* title bar */
.titlebar { height: 35px; flex: none; background: #f3f3f3; border-bottom: 2px solid #8a8a8a; display: flex; align-items: center; color: #333; font-size: 18px; padding-left: 5px; }
.applogo { width: 26px; height: 26px; flex: none; }
.apptitle { margin-left: 4px; width: 126px; white-space: nowrap; color: #3a3a3a; }
.menu { display: flex; gap: 36px; margin-left: 46px; }
.hasdot { position: relative; }
.dot { position: absolute; left: 44px; top: 2px; width: 5px; height: 6px; background: #f00000; }
.l2 { font-size: 16px; align-self: center; }
.alert { display: flex; gap: 24px; margin-left: 272px; color: #f41a1a; font-size: 19px; }
.menu-right { display: flex; gap: 22px; margin-left: auto; }
.clock { display: flex; align-items: center; gap: 9px; height: 33px; margin-left: 20px; padding-left: 4px; border-left: 1px solid #aaa; border-right: 1px solid #aaa; padding-right: 6px; }
.time { font-size: 15px; letter-spacing: .8px; }
.week { font-size: 17px; }
.winbtns { display: flex; gap: 21px; padding: 0 11px 0 20px; align-items: center; }
.winbtns svg { width: 16px; height: 20px; }

/* layout */
.workspace { flex: 1; display: flex; min-height: 0; }
.left { width: 1716px; flex: none; border-right: 2px solid #a00000; display: flex; flex-direction: column; background: #000; }

/* toolbar */
.toolbar { height: 32px; flex: none; display: flex; border-bottom: 2px solid #a00000; color: #b4b4b4; font-size: 18px; }
.panelbtn { width: 36px; border: 1px solid #a00000; border-width: 1px 2px 0 1px; display: flex; align-items: center; justify-content: center; }
.panelbtn svg { width: 18px; height: 18px; }
.periods { display: flex; gap: 13.4px; padding-left: 6px; align-items: center; }
.periods .cur { color: #38f0f0; }
.periods .more { margin-left: -2px; }
.tools { margin-left: auto; width: 421px; display: grid; grid-template-columns: repeat(8, 1fr); }
.tools span { border-left: 2px solid #800000; text-align: center; line-height: 31px; }

/* chart */
.chart { position: relative; height: 1239px; flex: none; }
.plot { display: block; }
.grid path { stroke: #b00000; stroke-width: 1.5; stroke-dasharray: 2 4; fill: none; }
.k-up { fill: none; stroke: #e02424; stroke-width: 1.7; }
.k-up.thin { stroke-width: 1.4; }
.k-upfill { fill: #ee2a2a; stroke: #ee2a2a; stroke-width: 1; }
.k-down { fill: #54ffff; stroke: #54ffff; stroke-width: 1; }
.k-wick { fill: none; stroke: #40d0d0; stroke-width: 1.4; }
.k-doji { fill: none; stroke: #e8e8e8; stroke-width: 1.4; }
.ma { fill: none; stroke-width: 1.5; stroke-linejoin: round; }
.ma1 { stroke: #c8c8c8; }
.ma2 { stroke: #c8c800; }
.ma3 { stroke: #d000d0; }
.ma4 { stroke: #00b800; }
.ghost rect { fill: #060c0c; }
.ghost text { fill: #0e0e0e; font-size: 18px; }
.peak-arrow { fill: none; stroke: #a8a8a8; stroke-width: 1.3; }
.hl { fill: #a8a8a8; font-size: 18px; }
.sig-red { fill: #8c0808; }
.sig-blue { fill: #103a70; }
.sig-t { fill: #f0f0f0; font-size: 18px; font-weight: 700; }
.sig-s { fill: #f00000; font-size: 14px; font-weight: 700; }
.axis { fill: none; stroke: #a80000; stroke-width: 2; }
.axis.thin { stroke-width: 1.5; }
.ax text { fill: #d82a2a; font-size: 19px; text-anchor: end; }
.signal { fill: none; stroke: #d0d0d0; stroke-width: 2; }
.cursor { fill: #000090; stroke: #a00000; stroke-width: 1; }
.cursor-t { fill: #c8c8c8; font-size: 17px; }
.cursor-d { fill: #c0c0c0; font-size: 17px; }
.dates text { fill: #d82a2a; font-size: 18px; }
.axis-cap { fill: #b4b4b4; font-size: 18px; }

.legend { position: absolute; left: 4px; top: 2px; display: flex; align-items: center; font-size: 18px; color: #c0c0c0; height: 24px; white-space: nowrap; }
.chev { width: 18px; height: 18px; margin: 0 5px 0 8px; flex: none; }
.lg-ma { margin-left: 9px; width: 88px; letter-spacing: .25px; font-size: 17px; }
.c1 { color: #e0e0e0; }
.c2 { color: #e0e000; }
.c3 { color: #f000f0; }
.c4 { color: #00e000; }
.chart-tools { position: absolute; right: 83px; top: 5px; display: flex; gap: 10px; align-items: center; }
.legend-sub { left: 0; top: 698px; gap: 8px; }
.legend-sub .chev { margin: 0 -3px 0 3px; }

/* tabs */
.tabs { height: 26px; flex: none; display: flex; border-bottom: 2px solid #a00000; font-size: 18px; color: #b4b4b4; line-height: 27px; white-space: nowrap; }
.tabs span { padding: 0 4.6px; border-right: 2px solid #800000; text-align: center; }
.tabs .w4 { width: 84px; padding: 0; }
.tabs .tight { padding: 0 3.5px; }
.tabs .cyan { color: #38e8e8; }
.tabs .yel { color: #c8c800; }
.tabs .push { margin-left: auto; border-left: 2px solid #800000; }
.tabs .narrow { width: 76px; border-right: 0; }

/* quote */
.quote { width: 406px; flex: none; background: #000; overflow: hidden; padding: 0 3px; font-size: 20px; letter-spacing: .6px; }
.q-head { height: 41px; margin: 0 -3px; padding-left: 52px; display: flex; align-items: center; }
.q-name { color: #00d8e8; font-size: 28px; letter-spacing: 0; font-weight: 500; }
.q-code { color: #b0b0b0; font-size: 19px; margin-left: 9px; }
.q-r { color: #f03030; font-size: 16px; margin: -14px 0 0 8px; }
.q-price { height: 44px; margin: 0 -3px; padding: 2px 5px 0 6px; border-bottom: 2px solid #a00000; display: grid; grid-template-columns: 143px 1fr auto; align-items: center; color: #f03030; font-size: 27px; font-weight: 700; line-height: 40px; letter-spacing: .4px; }
.q-up { display: flex; align-items: center; gap: 2px; }
.book { margin: 0 -3px; padding: 0 3px; }
.buy { padding-top: 1px; border-bottom: 2px solid #a00000; }
.split { height: 2px; margin: 0 -3px; background: linear-gradient(90deg, #a87830 46%, #2a6aa8 46%); }
.row-b { height: 27px; padding-top: 2px; display: grid; grid-template-columns: 100px 96px 117px 1fr; align-items: center; }
.row-i { height: 28.5px; padding-top: 2px; display: grid; grid-template-columns: 100px 96px 68px 1fr; align-items: center; }
.row-i .lb:nth-child(3) { margin-left: 8px; }
.row-i .pe { font-size: 20px; }
.row-i .eps { font-size: 21px; }
.row-f { height: 28.5px; padding-top: 2px; display: grid; grid-template-columns: 138px 110px 91px 1fr; align-items: center; }
.row-t { height: 27px; padding-top: 2px; display: grid; grid-template-columns: 100px 96px 118px 38px 1fr; align-items: center; -webkit-text-stroke: .35px; }
.row-t span:nth-child(4) { padding-left: 24px; }
.block { margin: 0 -3px; padding: 1px 3px 0; border-bottom: 2px solid #a00000; }
.pad6 { padding-bottom: 5px; }
.pad3 { padding-bottom: 3px; }
.lb { color: #b4b4b4; font-size: 23px; letter-spacing: 0; white-space: nowrap; line-height: 26px; margin-top: -2px; }
.r { text-align: right; white-space: nowrap; -webkit-text-stroke: .35px; }
.red { color: #f03030; }
.yel { color: #d0d000; }
.grn { color: #00e000; }
.gry { color: #c4c4c4; }
.dim { color: #a0a0a0; }
.sm { font-size: 17px; -webkit-text-stroke: 0; }
.barcell { display: flex; align-items: center; }
.bar { display: block; height: 10px; }
.bred { background: #ff3030; }
.bgrn { background: #00e800; }
.b22 { width: 22px; }
.b1 { width: 1px; }
.b105 { width: 105px; }
.b33 { width: 33px; }

/* sidebar */
.sidebar { width: 38px; flex: none; background: #f0f0f0; border-left: 2px solid #bcbcbc; display: flex; flex-direction: column; align-items: stretch; }
.cell { height: 34.4px; flex: none; display: flex; align-items: center; justify-content: center; }
.sep { height: 13.6px; flex: none; position: relative; }
.sep.short { height: 12.6px; }
.sep::after { content: ""; position: absolute; left: 5px; right: 5px; top: 6px; height: 1px; background: #b4b4b4; }
.ic { width: 24px; height: 24px; }
.arrow { fill: #fff; stroke: #4f97e4; stroke-width: 1.6; }
.ibox { fill: #fff; stroke: #5a9de0; stroke-width: 2; }
.fbox { width: 24px; height: 23px; background: #fff; border: 2px solid #5a9de0; color: #2f56c8; font-size: 14px; line-height: 19px; text-align: center; letter-spacing: -.5px; white-space: nowrap; overflow: hidden; }
.fbox.orange { color: #f07830; font-weight: 700; font-size: 16px; letter-spacing: 0; }
.fbox.teal { border-color: #3a9aa0; border-radius: 5px; font-style: italic; font-family: "Liberation Serif", serif; color: #203aa0; font-size: 15px; }
.rsi { color: #3a4eb8; font-size: 16px; font-weight: 700; letter-spacing: -.8px; }
.dollar { color: #d03030; font-size: 24px; font-weight: 700; text-shadow: 1px 1px 2px #888; }
.txt { color: #2a4aa0; font-size: 16px; }
.active { background: #f8f8f8; border: 2px solid; border-color: #b8b8b8 #f8f8f8 #f8f8f8 #b8b8b8; margin: 2px 0 0 2px; height: 32.4px; }

/* status */
.status { height: 37px; flex: none; background: #f4f4f4; border-top: 1px solid #ddd; display: flex; align-items: center; padding: 2px 0 0 2px; font-size: 20px; color: #111; white-space: nowrap; }
.st-icon { width: 20px; height: 20px; flex: none; margin-right: 4px; }
.idx { display: grid; grid-template-columns: 44px 86px 78px 81px 97px; margin-right: 26px; text-align: right; align-items: center; letter-spacing: .3px; -webkit-text-stroke: .3px; }
.idx.wide { grid-template-columns: 44px 84px 78px 81px 105px; margin-right: 19px; }
.nm { font-size: 22px; text-align: left; color: #222; letter-spacing: 0; -webkit-text-stroke: 0; }
.amt { color: #111; }
.mini { flex: none; }

/* overlay banner */
.ad { position: absolute; right: 0; bottom: 0; width: 800px; height: 81px; background: #7fa9d8; display: flex; align-items: center; }
.ad-cn { margin-left: 17px; color: #190a8c; font-size: 56px; line-height: 1; font-weight: 900; width: 285px; letter-spacing: 0; white-space: nowrap; }
.ad-logo { flex: none; margin-left: 18px; }
.ad-ring { fill: #e8eef8; font-size: 5px; }
.ad-mark { fill: #e9c94c; font-size: 44px; font-weight: 900; }
.ad-url { margin-left: 32px; color: #fff; font-family: "DejaVu Serif", serif; font-weight: 700; font-size: 49px; white-space: nowrap; letter-spacing: 0; }
```
